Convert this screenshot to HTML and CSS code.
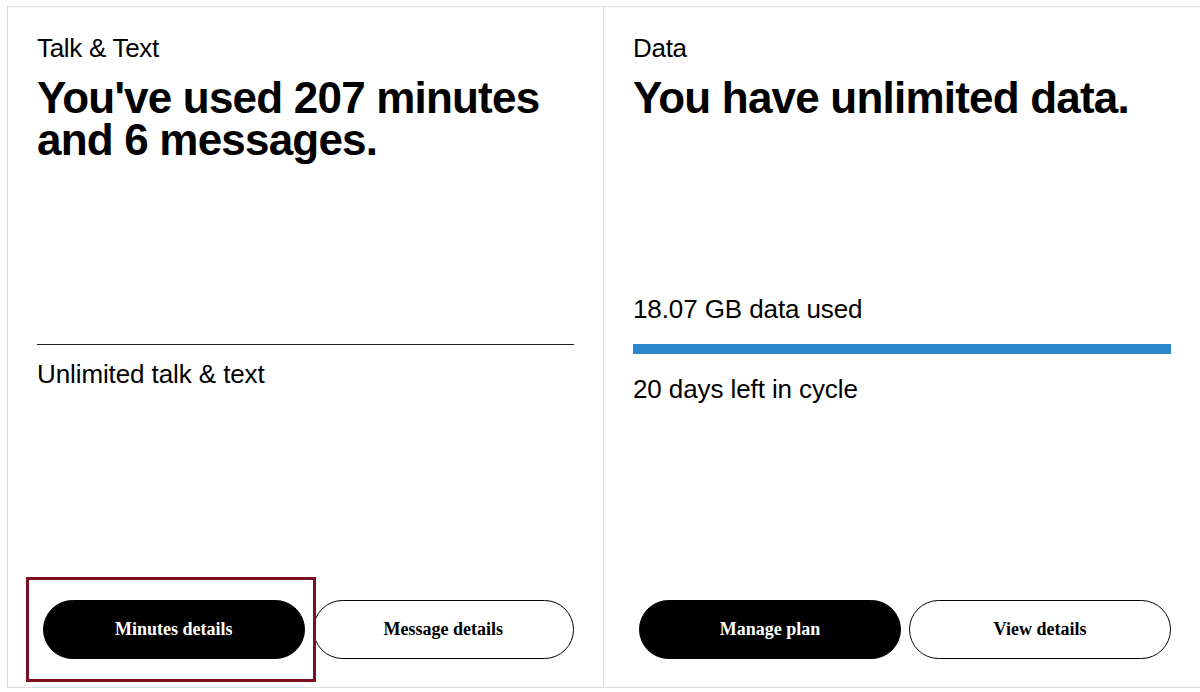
FILE: index.html
```html
<!DOCTYPE html>
<html lang="en">
<head>
  <meta charset="UTF-8">
  <meta name="viewport" content="width=device-width, initial-scale=1.0">
  <title>Usage</title>
  <link rel="stylesheet" href="styles.css">
</head>
<body>
  <div class="usage">
    <section class="card">
      <div class="card-label">Talk &amp; Text</div>
      <h2 class="card-title">You've used 207 minutes and 6 messages.</h2>

      <hr class="rule">
      <div class="stat stat-plan">Unlimited talk &amp; text</div>

      <div class="actions">
        <button class="btn btn-dark">Minutes details</button>
        <button class="btn btn-outline">Message details</button>
      </div>
      <div class="highlight"></div>
    </section>

    <section class="card">
      <div class="card-label">Data</div>
      <h2 class="card-title">You have unlimited data.</h2>

      <div class="stat stat-used">18.07 GB data used</div>
      <div class="bar"><div class="bar-fill" style="width: 100%"></div></div>
      <div class="stat stat-days">20 days left in cycle</div>

      <div class="actions">
        <button class="btn btn-dark">Manage plan</button>
        <button class="btn btn-outline">View details</button>
      </div>
    </section>
  </div>
</body>
</html>
```

FILE: styles.css
```css
body {
  margin: 0;
  background: #fff;
  font-family: 'Liberation Sans', Arial, sans-serif;
  color: #000;
}
.usage {
  display: grid;
  grid-template-columns: 595px 1fr;
  height: 680px;
  margin: 6px 0 0 7px;
  border: 1px solid #dcdcdc;
  border-right: none;
}
.card {
  position: relative;
  display: flex;
  flex-direction: column;
  padding: 27px 29px 28px 29px;
}
.card + .card {
  border-left: 1px solid #dcdcdc;
}
.card-label {
  font-size: 26px;
  line-height: 28px;
  letter-spacing: -0.3px;
}
.card-title {
  margin: 15px 0 0;
  font-size: 44px;
  line-height: 42px;
  font-weight: bold;
  letter-spacing: -0.8px;
  max-width: 530px;
}
.rule {
  margin: 183px 0 0;
  border: none;
  border-top: 1px solid #222;
}
.stat {
  font-size: 26px;
  line-height: 28px;
  letter-spacing: -0.1px;
}
.stat-plan {
  margin-top: 15px;
}
.stat-used {
  margin-top: 176px;
}
.bar {
  height: 10px;
  margin-top: 21px;
  background: #e6e6e6;
}
.bar-fill {
  height: 100%;
  background: #2a87c9;
}
.stat-days {
  margin-top: 21px;
}
.actions {
  display: flex;
  gap: 8px;
  margin-top: auto;
  padding-left: 6px;
}
.btn {
  flex: 1;
  height: 59px;
  border-radius: 30px;
  font-family: 'Liberation Serif', 'Times New Roman', serif;
  font-size: 18px;
  font-weight: bold;
  cursor: pointer;
}
.btn-dark {
  background: #000;
  color: #fff;
  border: 1px solid #000;
}
.btn-outline {
  background: #fff;
  color: #000;
  border: 1px solid #000;
}
.highlight {
  position: absolute;
  left: 18px;
  top: 570px;
  width: 290px;
  height: 105px;
  box-sizing: border-box;
  border: 3px solid #7d0f20;
  pointer-events: none;
}
```
